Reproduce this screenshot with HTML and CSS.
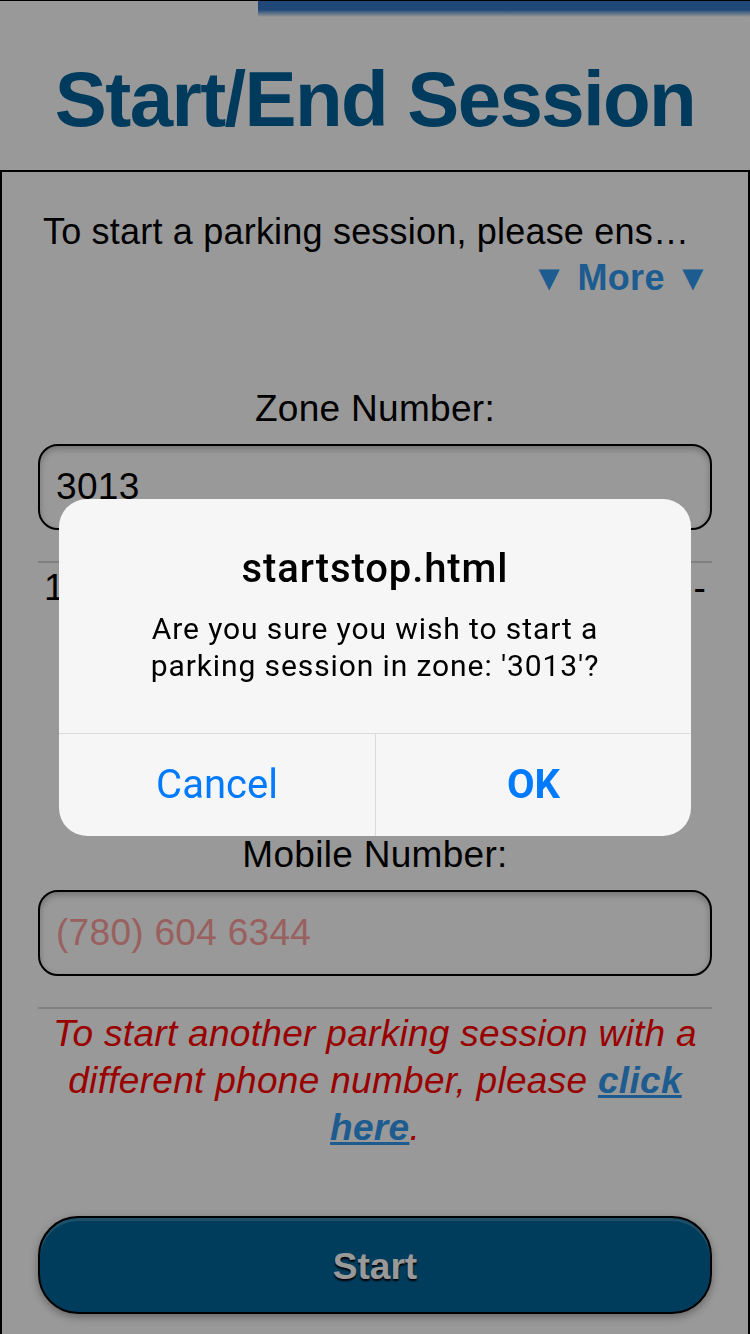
FILE: index.html
```html
<!DOCTYPE html>
<html lang="en">
<head>
<meta charset="utf-8">
<title>Start/End Session</title>
<link rel="stylesheet" href="styles.css">
</head>
<body>
<div class="page">
  <header class="header">
    <div class="stripe"></div>
    <h1 class="title">Start/End Session</h1>
  </header>
  <main class="panel">
    <p class="intro">To start a parking session, please ensure that your zone number and mobile number are correct.</p>
    <div class="more">▼ More ▼</div>

    <div class="label">Zone Number:</div>
    <div class="field"><span class="value">3013</span></div>
    <hr class="rule">
    <div class="duration"><span>1</span><span>-</span></div>

    <div class="label label-mobile">Mobile Number:</div>
    <div class="field"><span class="placeholder">(780) 604 6344</span></div>
    <hr class="rule">
    <p class="notice">To start another parking session with a different phone number, please <a class="link" href="#">click here</a>.</p>

    <button class="start" type="button">Start</button>
  </main>
</div>

<div class="overlay">
  <div class="alert">
    <div class="alert-body">
      <div class="alert-title">startstop.html</div>
      <div class="alert-msg">Are you sure you wish to start a<br>parking session in zone: '3013'?</div>
    </div>
    <div class="alert-actions">
      <button class="alert-btn" type="button">Cancel</button>
      <button class="alert-btn alert-btn-ok" type="button">OK</button>
    </div>
  </div>
</div>
</body>
</html>
```
FILE: styles.css
```css
html, body {
  margin: 0;
  padding: 0;
  background: #ffffff;
}
body {
  width: 750px;
  height: 1334px;
  overflow: hidden;
  font-family: "Liberation Sans", Arial, sans-serif;
  color: #000;
}
.page {
  width: 750px;
}
.header {
  height: 169px;
  border-top: 1px solid #000;
  display: flex;
  flex-direction: column;
}
.stripe {
  margin-left: 258px;
  height: 16px;
  background: linear-gradient(to bottom, #3479c8 0%, #3479c8 55%, rgba(52,121,200,0) 100%);
}
.title {
  margin: 43px 0 0 0;
  font-size: 78px;
  line-height: 78px;
  font-weight: 700;
  letter-spacing: -1.6px;
  color: #00639b;
  text-align: center;
}
.panel {
  border: 2px solid #000;
  border-bottom: none;
  padding: 0 36px 20px 36px;
  display: flex;
  flex-direction: column;
  letter-spacing: 0.3px;
}
.intro {
  margin: 37px 0 0 0;
  padding: 0 4px 0 5px;
  font-size: 36px;
  line-height: 46px;
  letter-spacing: 0.2px;
  white-space: nowrap;
  overflow: hidden;
  text-overflow: ellipsis;
  text-align: center;
}
.more {
  font-size: 36px;
  line-height: 46px;
  font-weight: 700;
  color: #3099f0;
  text-align: right;
  padding-right: 1px;
}
.label {
  margin-top: 85px;
  font-size: 37px;
  line-height: 46px;
  text-align: center;
}
.label-mobile {
  margin-top: 221px;
}
.field {
  margin-top: 12px;
  height: 82px;
  border: 2px solid #000;
  border-radius: 20px;
  background: #fff;
  box-shadow: inset 0 3px 6px rgba(0,0,0,0.25);
  display: flex;
  align-items: center;
  padding: 0 16px;
  font-size: 37px;
}
.placeholder {
  color: #ffa0a0;
}
.rule {
  margin: 31px 0 0 0;
  border: none;
  height: 2px;
  background: #d6d6d6;
}
.duration {
  margin-top: 2px;
  display: flex;
  justify-content: space-between;
  padding: 0 6px 0 6px;
  font-size: 37px;
  line-height: 46px;
}
.notice {
  margin: 1px 0 0 0;
  font-size: 37px;
  line-height: 47px;
  font-style: italic;
  color: #ff0000;
  text-align: center;
}
.link {
  color: #3299f0;
  font-weight: 700;
  text-decoration: underline;
}
.start {
  margin-top: 65px;
  height: 98px;
  border: 2px solid #000;
  border-radius: 40px;
  background: #00669a;
  box-shadow: inset 0 3px 0 rgba(255,255,255,0.2), 0 3px 8px rgba(0,0,0,0.35);
  color: #fff;
  font-family: "Liberation Sans", Arial, sans-serif;
  font-size: 37px;
  font-weight: 700;
  padding-top: 4px;
  text-shadow: 0 2px 2px #000;
}
.overlay {
  position: fixed;
  inset: 0;
  background: rgba(0,0,0,0.4);
  display: flex;
  align-items: center;
  justify-content: center;
}
.alert {
  width: 632px;
  border-radius: 28px;
  background: #f6f6f6;
  overflow: hidden;
  font-family: Roboto, "Noto Sans", sans-serif;
  color: #000;
}
.alert-body {
  padding: 48px 20px 49px 20px;
  text-align: center;
}
.alert-title {
  font-size: 40px;
  line-height: 44px;
  font-weight: 500;
  letter-spacing: 0.9px;
}
.alert-msg {
  margin-top: 19px;
  font-size: 30px;
  line-height: 37px;
  letter-spacing: 0.9px;
}
.alert-actions {
  display: grid;
  grid-template-columns: 1fr 1fr;
  border-top: 1px solid #dadada;
}
.alert-btn {
  height: 102px;
  border: none;
  background: transparent;
  font-family: Roboto, "Noto Sans", sans-serif;
  font-size: 40px;
  color: #007aff;
  padding: 0;
}
.alert-btn-ok {
  border-left: 1px solid #dadada;
  font-weight: 700;
}
```
